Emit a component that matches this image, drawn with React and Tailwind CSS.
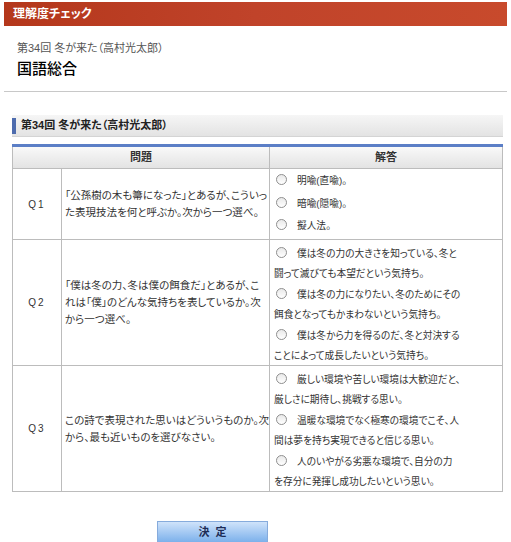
import React from "react";

const questions = [
  {
    no: "Q1",
    h: "h-[71px]",
    q: ["「公孫樹の木も箒になった」とあるが、こういっ", "た表現技法を何と呼ぶか。次から一つ選べ。"],
    opts: [["明喩(直喩)。"], ["暗喩(隠喩)。"], ["擬人法。"]],
  },
  {
    no: "Q2",
    h: "h-[126px]",
    q: ["「僕は冬の力、冬は僕の餌食だ」とあるが、こ", "れは「僕」のどんな気持ちを表しているか。次", "から一つ選べ。"],
    opts: [
      ["僕は冬の力の大きさを知っている、冬と", "闘って滅びても本望だという気持ち。"],
      ["僕は冬の力になりたい、冬のためにその", "餌食となってもかまわないという気持ち。"],
      ["僕は冬から力を得るのだ、冬と対決する", "ことによって成長したいという気持ち。"],
    ],
  },
  {
    no: "Q3",
    h: "h-[124px]",
    q: ["この詩で表現された思いはどういうものか。次", "から、最も近いものを選びなさい。"],
    opts: [
      ["厳しい環境や苦しい環境は大歓迎だと、", "厳しさに期待し、挑戦する思い。"],
      ["温暖な環境でなく極寒の環境でこそ、人", "間は夢を持ち実現できると信じる思い。"],
      ["人のいやがる劣悪な環境で、自分の力", "を存分に発揮し成功したいという思い。"],
    ],
  },
];

function Radio() {
  return (
    <span className="inline-block align-[-1px] ml-[2px] mr-[10px] w-[11px] h-[11px] rounded-full border border-[#8f8f8f] bg-gradient-to-b from-[#e9e9e9] to-white" />
  );
}

function Lines({ lines }) {
  return lines.map((l, i) => (
    <React.Fragment key={i}>
      {i > 0 && <br />}
      {l}
    </React.Fragment>
  ));
}

export default function App() {
  return (
    <div className="w-[511px] h-[542px] overflow-hidden bg-white text-[#333] font-['Liberation_Sans','Noto_Sans_CJK_JP',sans-serif] [font-feature-settings:'palt']">
      {/* title bar */}
      <div className="mx-[4px] mt-[2px] h-[24px] px-[9px] flex items-center bg-gradient-to-r from-[#b4371b] via-[#c0432a] to-[#c84a2c] text-white text-[12px] font-bold">
        理解度チェック
      </div>

      <div className="pl-[17px] pt-[14px]">
        <div className="text-[11px] leading-[16px] text-[#555]">第34回 冬が来た（高村光太郎）</div>
        <div className="mt-[3px] text-[15px] leading-[20px] font-medium text-black">国語総合</div>
      </div>

      <div className="mx-[4px] mt-[12px] border-t border-[#c8c8c8]" />

      {/* section heading */}
      <div className="mx-[12px] mt-[23px] w-[491px] h-[22px] flex items-center bg-gradient-to-b from-[#f6f6f6] to-[#e3e3e3] border-b border-[#d4d4d4]">
        <div className="w-[4px] h-[16px] bg-[#4e6cae]" />
        <div className="pl-[5px] text-[11px] font-bold text-[#222]">第34回 冬が来た（高村光太郎）</div>
      </div>

      <table className="ml-[12px] mt-[7px] w-[491px] border-collapse border-t-[3px] border-t-[#5b7ec6] text-[10.5px] table-fixed">
        <colgroup>
          <col className="w-[49px]" />
          <col className="w-[208px]" />
          <col />
        </colgroup>
        <thead>
          <tr className="h-[23px] bg-gradient-to-b from-[#fafafa] to-[#e2e2e2]">
            <th colSpan={2} className="border border-t-0 border-[#bcbcbc] font-bold text-[11px] text-[#333]">
              問題
            </th>
            <th className="border border-t-0 border-[#bcbcbc] font-bold text-[11px] text-[#333]">解答</th>
          </tr>
        </thead>
        <tbody>
          {questions.map((item) => (
            <tr key={item.no} className={item.h}>
              <td className="border border-[#bcbcbc] text-center align-middle tracking-[2px] text-[10px]">{item.no}</td>
              <td className="border border-[#bcbcbc] align-middle pl-[3px] pr-0 leading-[17px] whitespace-nowrap">
                <Lines lines={item.q} />
              </td>
              <td className="border border-[#bcbcbc] align-top px-[4px] whitespace-nowrap text-[9.7px]">
                {item.opts[0].length === 1 ? (
                  <div className="pt-[1px]">
                    {item.opts.map((o, i) => (
                      <div key={i} className="leading-[22.5px]">
                        <Radio />
                        {o[0]}
                      </div>
                    ))}
                  </div>
                ) : (
                  <div className="pt-[4px] flex flex-col gap-[2px]">
                    {item.opts.map((o, i) => (
                      <div key={i} className="leading-[19.5px]">
                        <Radio />
                        <Lines lines={o} />
                      </div>
                    ))}
                  </div>
                )}
              </td>
            </tr>
          ))}
        </tbody>
      </table>

      <div className="ml-[157px] mt-[27px]">
        <button
          type="button"
          className="w-[111px] h-[23px] border border-[#86abdc] bg-gradient-to-b from-[#cfe3fa] to-[#78aeea] text-[11px] font-bold text-[#1d2c55] tracking-[6px] pl-[6px]"
        >
          決定
        </button>
      </div>
    </div>
  );
}
